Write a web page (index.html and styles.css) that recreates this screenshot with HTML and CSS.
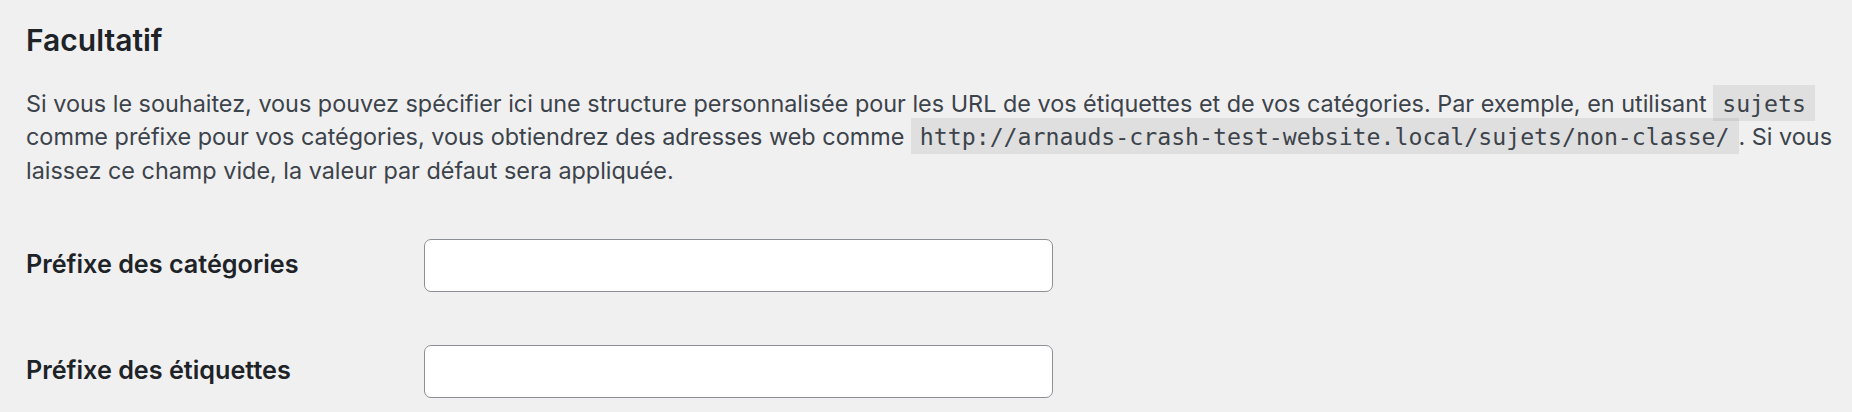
FILE: index.html
```html
<!DOCTYPE html>
<html lang="fr">
<head>
<meta charset="utf-8">
<title>Facultatif</title>
<link rel="stylesheet" href="styles.css">
</head>
<body>
<div class="wrap">
  <h2 class="title">Facultatif</h2>
  <p class="desc">Si vous le souhaitez, vous pouvez spécifier ici une structure personnalisée pour les URL de vos étiquettes et de vos catégories. Par exemple, en utilisant <code>sujets</code> comme préfixe pour vos catégories, vous obtiendrez des adresses web comme <code>http://arnauds-crash-test-website.local/sujets/non-classe/</code>. Si vous laissez ce champ vide, la valeur par défaut sera appliquée.</p>
  <div class="form-table">
    <div class="form-row">
      <label class="form-label" for="category_base">Préfixe des catégories</label>
      <input class="regular-text" type="text" id="category_base">
    </div>
    <div class="form-row">
      <label class="form-label" for="tag_base">Préfixe des étiquettes</label>
      <input class="regular-text" type="text" id="tag_base">
    </div>
  </div>
</div>
</body>
</html>
```
FILE: styles.css
```css
html, body {
  margin: 0;
  padding: 0;
  background: #f0f0f1;
}
.wrap {
  padding: 0 0 0 26px;
  width: 1842px;
  box-sizing: border-box;
  font-family: Inter, Roboto, "Liberation Sans", sans-serif;
}
.title {
  margin: 0;
  padding-top: 21px;
  font-size: 30px;
  line-height: 39px;
  font-weight: 600;
  color: #1d2327;
}
.desc {
  margin: 0;
  margin-top: 27px;
  font-size: 23.4px;
  line-height: 33.4px;
  color: #3c434a;
}
.desc code {
  font-family: "DejaVu Sans Mono", "Liberation Mono", monospace;
  font-size: 23.2px;
  background: rgba(0, 0, 0, 0.07);
  padding: 5.4px 9px 3.6px;
  color: #3c434a;
}
.form-table {
  margin-top: 52px;
  display: flex;
  flex-direction: column;
  gap: 53px;
}
.form-row {
  display: grid;
  grid-template-columns: 398px 629px;
  align-items: start;
}
.form-label {
  margin-top: 9px;
  font-size: 25.2px;
  line-height: 32.8px;
  font-weight: 600;
  color: #1d2327;
}
.regular-text {
  box-sizing: border-box;
  width: 629px;
  height: 53px;
  margin: 0;
  background: #fff;
  border: 1.8px solid #8c8f94;
  border-radius: 7px;
  font-size: 25px;
  padding: 0 14px;
}
```
